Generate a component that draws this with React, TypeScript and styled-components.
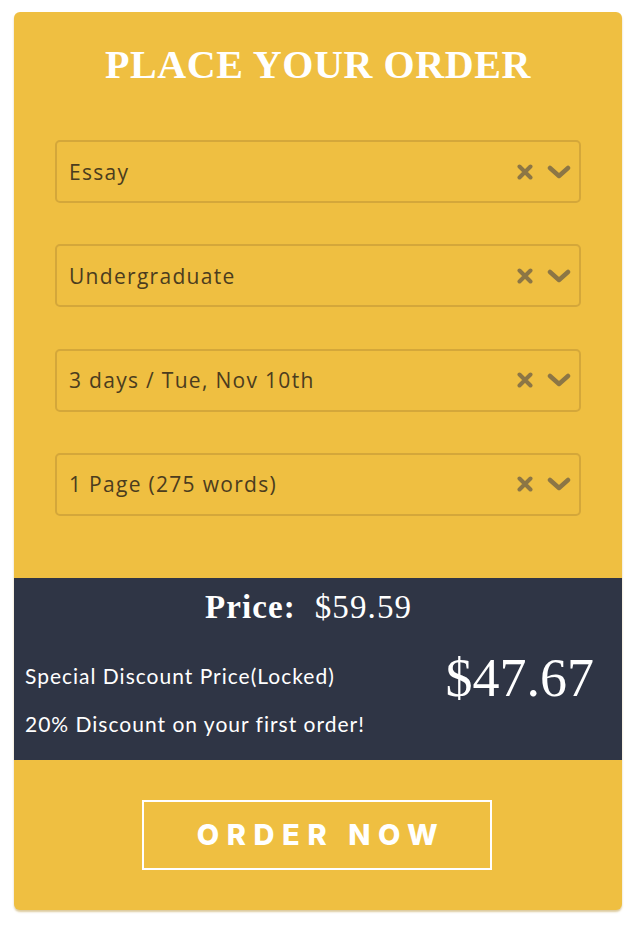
import React from "react";
import styled, { createGlobalStyle } from "styled-components";

const Global = createGlobalStyle`
  html, body { margin: 0; padding: 0; background: #ffffff; }
  * { box-sizing: border-box; }
`;

const Page = styled.div`
  padding: 12px 14px 16px 14px;
`;

const Card = styled.div`
  width: 608px;
  height: 898px;
  background: #efbf41;
  border-radius: 6px;
  box-shadow: 0 2px 2px rgba(180, 140, 40, 0.45);
  padding-top: 31px;
  display: flex;
  flex-direction: column;
  overflow: hidden;
`;

const Title = styled.h1`
  margin: 0;
  font-family: "Liberation Serif", "Times New Roman", serif;
  font-weight: 700;
  font-size: 40px;
  line-height: 44px;
  letter-spacing: 0.6px;
  color: #ffffff;
  text-align: center;
`;

const Form = styled.div`
  display: flex;
  flex-direction: column;
  gap: 41.3px;
  padding: 53px 41px 62px 41px;
`;

const Select = styled.div`
  height: 63px;
  border: 2px solid #d4a73a;
  border-radius: 5px;
  display: flex;
  align-items: center;
  padding: 0 8px 0 12px;
`;

const Value = styled.span`
  flex: 1;
  font-family: "Open Sans", "Liberation Sans", sans-serif;
  font-size: 21px;
  letter-spacing: 1.3px;
  color: #4b3c1e;
`;

const Icons = styled.div`
  display: flex;
  align-items: center;
  gap: 13px;
  color: #8c7645;
`;

const Dark = styled.div`
  background: #2f3545;
  height: 182px;
  padding: 10px 11px 0 11px;
  display: flex;
  flex-direction: column;
`;

const PriceLine = styled.div`
  text-align: center;
  padding-right: 19px;
  font-family: "Liberation Serif", "Times New Roman", serif;
  font-size: 33px;
  line-height: 38px;
  color: #ffffff;
  letter-spacing: 1.1px;
`;

const PriceLabel = styled.span`
  font-weight: 700;
  margin-right: 19px;
`;

const DiscountRow = styled.div`
  display: flex;
  align-items: flex-start;
  justify-content: space-between;
  margin-top: 22px;
`;

const DiscountText = styled.div`
  display: flex;
  flex-direction: column;
  gap: 20px;
  margin-top: 14px;
  font-family: "Lato", "Open Sans", sans-serif;
  font-size: 21px;
  line-height: 28px;
  letter-spacing: 1px;
  color: #ffffff;
`;

const BigPrice = styled.div`
  font-family: "Liberation Serif", "Times New Roman", serif;
  font-size: 54px;
  line-height: 60px;
  color: #ffffff;
  margin-right: 17px;
`;

const ButtonWrap = styled.div`
  display: flex;
  justify-content: center;
  padding-top: 40px;
`;

const OrderButton = styled.button`
  width: 350px;
  height: 70px;
  margin-right: 2px;
  padding: 0 0 0 8px;
  background: transparent;
  border: 2px solid #ffffff;
  color: #ffffff;
  font-family: "Inter", "Liberation Sans", sans-serif;
  font-weight: 800;
  font-size: 29px;
  letter-spacing: 7.6px;
  cursor: pointer;
`;

const Cross = () => (
  <svg width="18" height="16" viewBox="0 0 18 16">
    <path d="M3.5 2.5 L14.5 13.5 M14.5 2.5 L3.5 13.5" stroke="currentColor" strokeWidth="4" strokeLinecap="round" />
  </svg>
);

const Chevron = () => (
  <svg width="24" height="16" viewBox="0 0 24 16">
    <path d="M3 4 L12 12 L21 4" stroke="currentColor" strokeWidth="4.5" fill="none" strokeLinecap="round" strokeLinejoin="round" />
  </svg>
);

const options = ["Essay", "Undergraduate", "3 days / Tue, Nov 10th", "1 Page (275 words)"];

export default function App() {
  return (
    <>
      <Global />
      <Page>
        <Card>
          <Title>PLACE YOUR ORDER</Title>
          <Form>
            {options.map((o) => (
              <Select key={o}>
                <Value>{o}</Value>
                <Icons>
                  <Cross />
                  <Chevron />
                </Icons>
              </Select>
            ))}
          </Form>
          <Dark>
            <PriceLine>
              <PriceLabel>Price:</PriceLabel>$59.59
            </PriceLine>
            <DiscountRow>
              <DiscountText>
                <span>Special Discount Price(Locked)</span>
                <span>20% Discount on your first order!</span>
              </DiscountText>
              <BigPrice>$47.67</BigPrice>
            </DiscountRow>
          </Dark>
          <ButtonWrap>
            <OrderButton>ORDER NOW</OrderButton>
          </ButtonWrap>
        </Card>
      </Page>
    </>
  );
}
